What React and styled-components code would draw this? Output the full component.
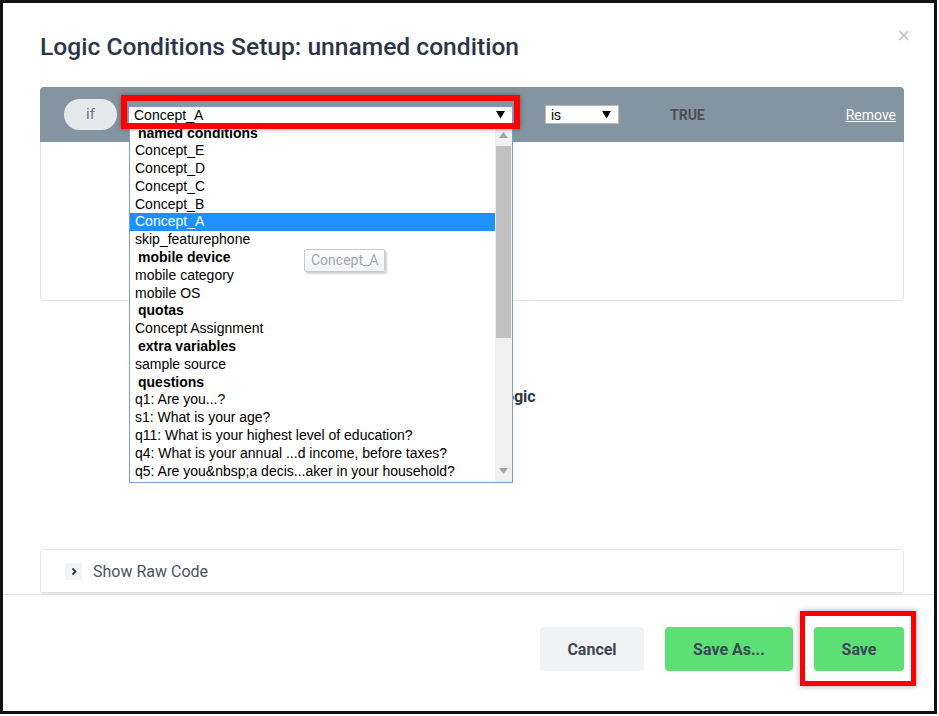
import React from 'react';
import styled, { createGlobalStyle } from 'styled-components';

const Global = createGlobalStyle`
  html, body { margin: 0; padding: 0; background: #fff; }
  body { font-family: Roboto, "Liberation Sans", sans-serif; }
  * { box-sizing: border-box; }
`;

const Frame = styled.div`
  width: 937px;
  height: 714px;
  border: 3px solid #111;
  background: #fff;
  display: flex;
  flex-direction: column;
  position: relative;
`;

const Header = styled.div`
  display: flex;
  justify-content: space-between;
  align-items: flex-start;
  padding: 30px 30px 0 37px;
  height: 84px;
`;

const Title = styled.h1`
  margin: 0;
  font-size: 24.6px;
  line-height: 28px;
  font-weight: 500;
  color: #2b3547;
`;

const Close = styled.span`
  font-size: 22px;
  line-height: 18px;
  color: #c4c4c4;
  margin-top: -6px;
  margin-right: -6px;
  font-family: "Liberation Sans", sans-serif;
`;

const Body = styled.div`
  flex: 1;
  padding: 0 30px 0 37px;
  display: flex;
  flex-direction: column;
  overflow: hidden;
`;

const Card = styled.div`
  border: 1px solid #e3e5e8;
  border-radius: 4px;
  height: 214px;
  overflow: visible;
`;

const CardHead = styled.div`
  height: 55px;
  margin: -1px -1px 0 -1px;
  background: #8594a1;
  border-radius: 4px 4px 0 0;
  display: flex;
  align-items: center;
  padding: 0 8px 0 24px;
`;

const Pill = styled.div`
  width: 53px;
  height: 31px;
  border-radius: 16px;
  background: #e6e9ec;
  color: #6b7483;
  font-size: 15px;
  display: flex;
  align-items: center;
  justify-content: center;
  margin-top: -1px;
`;

const SelectWrap = styled.div`
  position: relative;
  margin-left: ${p => p.$gap}px;
  width: ${p => p.$w}px;
  ${p => p.$mark && `
    &::before {
      content: '';
      position: absolute;
      left: -7px; right: -7px; top: -11px; bottom: -5px;
      border: 6px solid #ff0000;
      box-shadow: 0 0 5px rgba(0,0,0,0.35);
      z-index: 3;
      pointer-events: none;
    }
  `}
`;

const SelectBox = styled.div`
  height: ${p => p.$h}px;
  background: #fff;
  border: 1px solid ${p => (p.$focus ? '#7a9cd3' : '#b9b9b9')};
  border-bottom-color: ${p => (p.$focus ? '#222' : '#b9b9b9')};
  display: flex;
  align-items: center;
  justify-content: space-between;
  padding: 0 7px 0 5px;
  font-family: "Liberation Sans", Arial, sans-serif;
  font-size: 14px;
  color: #000;
`;

const Arrow = () => (
  <svg width="9" height="9" viewBox="0 0 9 9">
    <polygon points="0,1 9,1 4.5,8.5" fill="#000" />
  </svg>
);

const TrueText = styled.span`
  margin-left: 51px;
  font-weight: 700;
  font-size: 14px;
  color: #4c4f54;
`;

const RemoveLink = styled.a`
  margin-left: auto;
  color: #fff;
  font-size: 14px;
  text-decoration: underline;
`;

const Dropdown = styled.div`
  position: absolute;
  left: 1px;
  right: 0;
  top: 18px;
  height: 359px;
  background: #fff;
  border: 1px solid #7f9dc9;
  display: flex;
  z-index: 2;
  font-family: "Liberation Sans", Arial, sans-serif;
  font-size: 14px;
`;

const List = styled.div`
  flex: 1;
`;

const Item = styled.div`
  height: 17.8px;
  line-height: 17.8px;
  white-space: nowrap;
  padding-left: ${p => (p.$group ? 8 : 5)}px;
  font-weight: ${p => (p.$group ? 700 : 400)};
  color: ${p => (p.$active ? '#fff' : '#000')};
  background: ${p => (p.$active ? '#1e90ff' : 'transparent')};
`;

const Scroll = styled.div`
  width: 17px;
  background: #f0f0f0;
  display: flex;
  flex-direction: column;
  align-items: center;
`;

const ScrollBtn = styled.div`
  height: 21px;
  display: flex;
  align-items: center;
  justify-content: center;
`;

const Thumb = styled.div`
  width: 15px;
  height: 192px;
  background: #c1c1c1;
`;

const Tooltip = styled.div`
  position: absolute;
  left: 176px;
  top: 143px;
  height: 23px;
  padding: 0 6px;
  line-height: 21px;
  border: 1px solid #c9c9c9;
  border-radius: 2px;
  background: linear-gradient(#fff, #f1f2f6);
  color: #a1a6b0;
  font-size: 14px;
  box-shadow: 2px 2px 2px rgba(0,0,0,0.18);
  z-index: 4;
`;

const AddRow = styled.div`
  height: 248px;
  padding-top: 84px;
  text-align: center;
  font-size: 16px;
  line-height: 24px;
  font-weight: 700;
  color: #2d3748;
`;

const RawPanel = styled.div`
  border: 1px solid #e3e6ea;
  border-bottom-width: 2px;
  border-radius: 4px;
  height: 45px;
  flex-shrink: 0;
  display: flex;
  align-items: center;
  padding-left: 24px;
  gap: 11px;
  font-size: 16px;
  color: #4a5568;
`;

const Chevron = styled.span`
  width: 17px;
  height: 17px;
  background: #f3f4f6;
  border-radius: 2px;
  display: flex;
  align-items: center;
  justify-content: center;
`;

const Footer = styled.div`
  border-top: 1px solid #e4e6ea;
  padding: 32px 30px 0 0;
  height: 117px;
  display: flex;
  justify-content: flex-end;
  gap: 21px;
`;

const Button = styled.button`
  height: 44px;
  width: ${p => p.$w}px;
  border: none;
  border-radius: 4px;
  background: ${p => (p.$green ? '#5cdf74' : '#f1f2f4')};
  color: #3d4759;
  font-family: Roboto, sans-serif;
  font-size: 16px;
  font-weight: 700;
  position: relative;
  ${p => p.$mark && `
    &::after {
      content: '';
      position: absolute;
      left: -14px; right: -12px; top: -16px; bottom: -15px;
      border: 5px solid #ff0000;
      box-shadow: 0 0 6px rgba(0,0,0,0.35);
    }
  `}
`;

const options = [
  { t: 'named conditions', g: true },
  { t: 'Concept_E' },
  { t: 'Concept_D' },
  { t: 'Concept_C' },
  { t: 'Concept_B' },
  { t: 'Concept_A', a: true },
  { t: 'skip_featurephone' },
  { t: 'mobile device', g: true },
  { t: 'mobile category' },
  { t: 'mobile OS' },
  { t: 'quotas', g: true },
  { t: 'Concept Assignment' },
  { t: 'extra variables', g: true },
  { t: 'sample source' },
  { t: 'questions', g: true },
  { t: 'q1: Are you...?' },
  { t: 's1: What is your age?' },
  { t: 'q11: What is your highest level of education?' },
  { t: 'q4: What is your annual ...d income, before taxes?' },
  { t: 'q5: Are you&nbsp;a decis...aker in your household?' },
];

const SmallTri = ({ up }) => (
  <svg width="9" height="6" viewBox="0 0 9 6">
    <polygon points={up ? '0,6 9,6 4.5,0' : '0,0 9,0 4.5,6'} fill="#a3a3a3" />
  </svg>
);

export default function App() {
  return (
    <>
      <Global />
      <Frame>
        <Header>
          <Title>Logic Conditions Setup: unnamed condition</Title>
          <Close>×</Close>
        </Header>
        <Body>
          <Card>
            <CardHead>
              <Pill>if</Pill>
              <SelectWrap $gap={11} $w={385} $mark>
                <SelectBox $h={18} $focus>
                  <span>Concept_A</span>
                  <Arrow />
                </SelectBox>
                <Dropdown>
                  <List>
                    {options.map(o => (
                      <Item key={o.t} $group={o.g} $active={o.a}>{o.t}</Item>
                    ))}
                  </List>
                  <Scroll>
                    <ScrollBtn><SmallTri up /></ScrollBtn>
                    <Thumb />
                    <div style={{ flex: 1 }} />
                    <ScrollBtn><SmallTri /></ScrollBtn>
                  </Scroll>
                </Dropdown>
                <Tooltip>Concept_A</Tooltip>
              </SelectWrap>
              <SelectWrap $gap={32} $w={74}>
                <SelectBox $h={19}>
                  <span>is</span>
                  <Arrow />
                </SelectBox>
              </SelectWrap>
              <TrueText>TRUE</TrueText>
              <RemoveLink>Remove</RemoveLink>
            </CardHead>
          </Card>
          <AddRow>Add Nested Logic</AddRow>
          <RawPanel>
            <Chevron>
              <svg width="8" height="9" viewBox="0 0 8 9">
                <polyline points="2.5,1.5 5.5,4.5 2.5,7.5" fill="none" stroke="#2d3748" strokeWidth="1.8" />
              </svg>
            </Chevron>
            Show Raw Code
          </RawPanel>
        </Body>
        <Footer>
          <Button $w={104}>Cancel</Button>
          <Button $w={128} $green>Save As...</Button>
          <Button $w={90} $green $mark>Save</Button>
        </Footer>
      </Frame>
    </>
  );
}
